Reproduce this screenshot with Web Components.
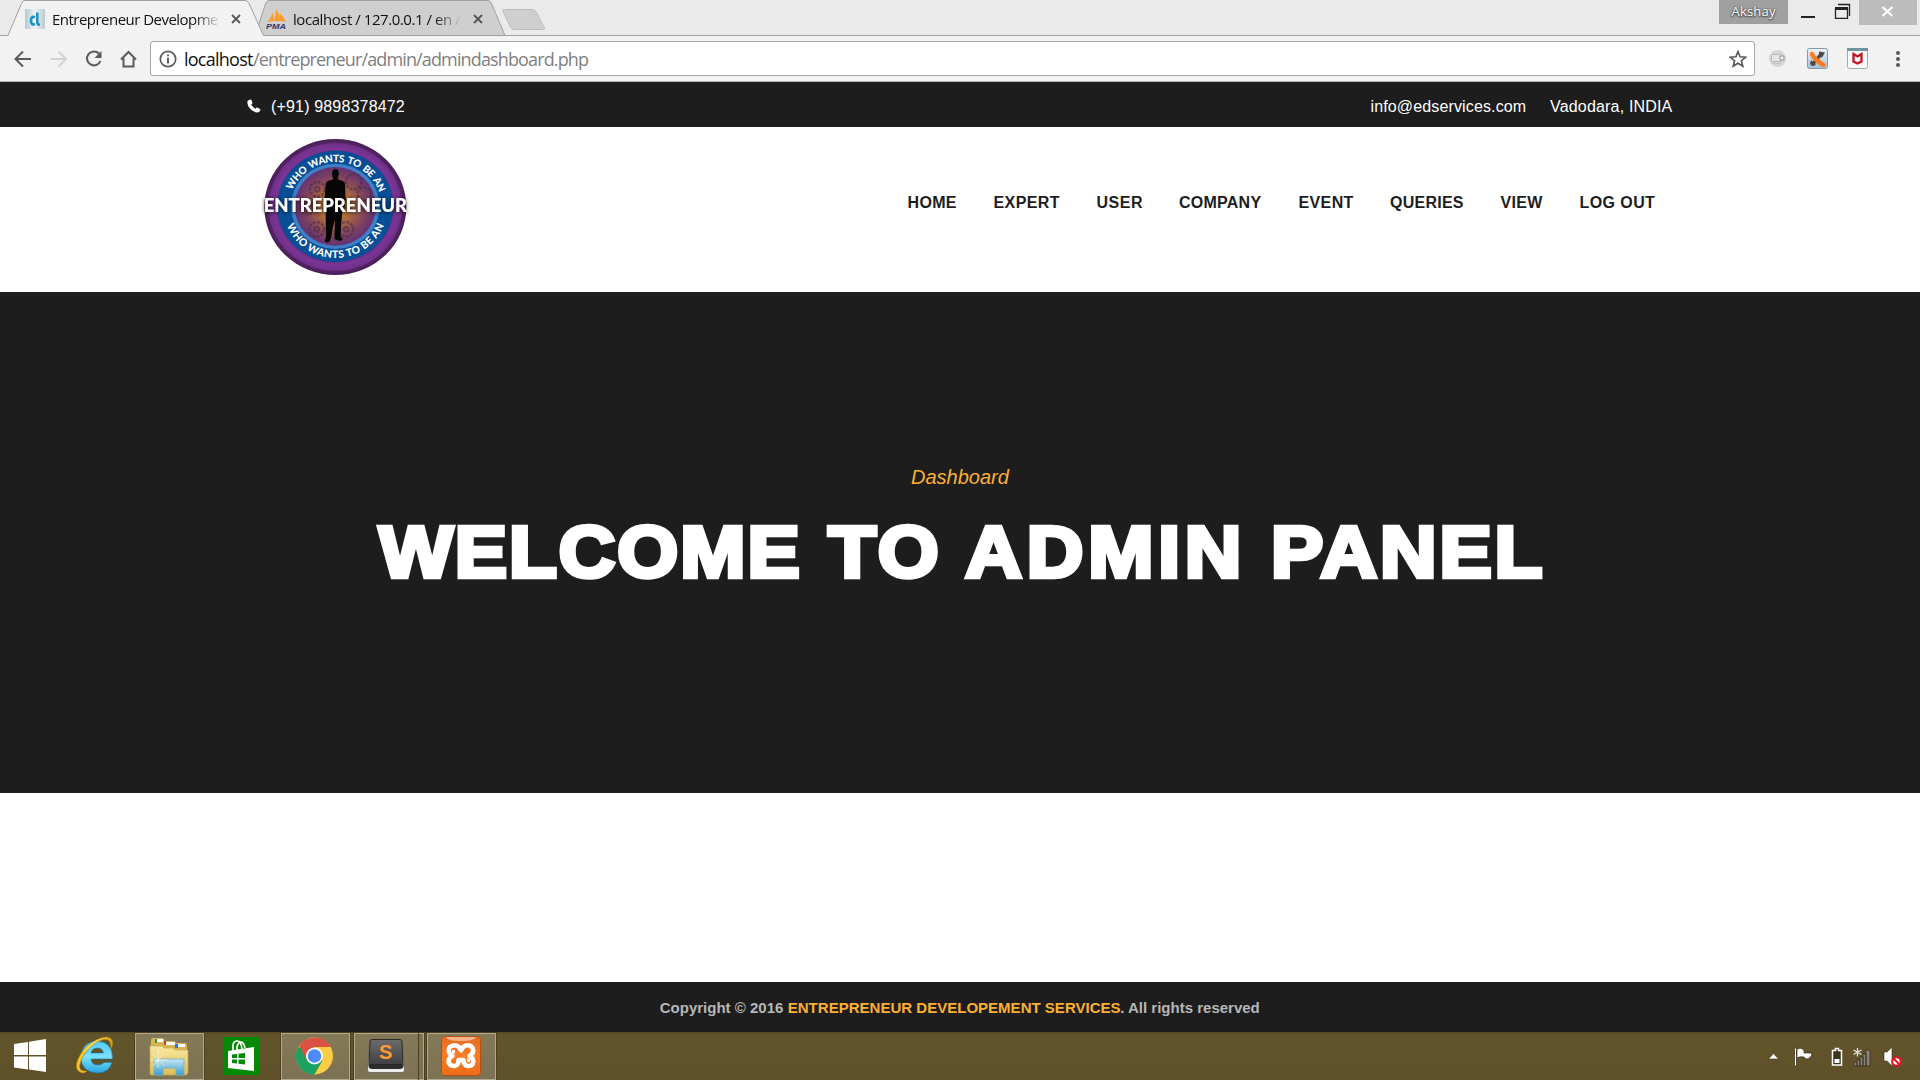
<!DOCTYPE html>
<html lang="en">
<head>
<meta charset="utf-8">
<title>Entrepreneur Development</title>
<style>
html,body{margin:0;height:100%;overflow:hidden;background:#fff}
body{font-family:"Liberation Sans",Arial,sans-serif}
</style>
</head>
<body>
<desktop-screen></desktop-screen>
<script>
const define = (name, html) => {
  const t = document.createElement('template');
  t.innerHTML = html;
  customElements.define(name, class extends HTMLElement {
    constructor() {
      super();
      this.attachShadow({ mode: 'open' }).appendChild(t.content.cloneNode(true));
    }
  });
};

/* Text run tracked to occupy a given width in pixels. */
customElements.define('fit-text', class extends HTMLElement {
  constructor() {
    super();
    this.attachShadow({ mode: 'open' }).innerHTML =
      '<style>:host{display:block;white-space:pre;flex:none;overflow:visible}span{display:inline-block}</style><span><slot></slot></span>';
  }
  connectedCallback() {
    const span = this.shadowRoot.querySelector('span');
    const w = +this.getAttribute('w');
    const n = this.textContent.length;
    const natural = span.offsetWidth;
    span.style.letterSpacing = ((w - natural) / (n - 1)) + 'px';
    this.style.width = w + 'px';
  }
});

define('browser-tabs', `
<style>
:host{display:block;height:36px;background:#eaeaea;position:relative;font:15px "Open Sans","Noto Sans",sans-serif;color:#111}
.shapes{position:absolute;left:0;top:0}
.row{position:relative;display:flex;height:36px}
.tab{display:flex;height:20px;padding-top:9px;align-items:center;box-sizing:content-box}
.tab svg{flex:none}
.one{margin-left:25px}.two{margin-left:24px}
.label{margin-left:7px;line-height:20px;-webkit-mask-image:linear-gradient(90deg,#000 84%,transparent)}
.one .label{width:169px;margin-right:9px}
.two .label{width:168px;margin-right:11px}
.win{margin-left:auto;display:flex;align-items:flex-start}
.user{width:69px;height:24px;background:#a0a0a0;color:#fff;font-size:13px;line-height:23px;text-shadow:0 0 2px #333,0 1px 2px #333;display:flex;justify-content:center}
.win svg{flex:none}
</style>
<svg class="shapes" width="1920" height="36">
  <path d="M0 35.5H1920" stroke="#a3a3a3"/>
  <path d="M502.800 11Q502.500 9.500 504.500 9.500H532Q535 9.500 536.200 12L544 27Q545.500 29.500 542.500 29.500H514.500Q511.500 29.500 510.500 27Z" fill="#cfcfcf" stroke="#bcbcbc"/>
  <path d="M255 35.500L265.500 4Q266.500.5 269 .5H488Q490.500.5 491.700 4L505 35.500Z" fill="#cfcfcf" stroke="#9f9f9f"/>
  <path d="M8 35.500L21.500 3.500Q22.500.5 25 .5H245Q247.500.5 249 3.500L263.500 35.500" fill="#f2f2f2" stroke="#9f9f9f"/>
  <path d="M8.500 35.500H263" stroke="#f2f2f2"/>
</svg>
<div class="row">
  <div class="tab one">
    <svg width="20" height="20" viewBox="0 0 20 20"><defs><linearGradient id="f"><stop stop-color="#b4cbd4"/><stop offset=".5" stop-color="#eef3f4"/><stop offset="1" stop-color="#b9c9cf"/></linearGradient></defs><rect width="20" height="20" fill="url(#f)"/><path d="M10 8.200C6.500 7 6 9.500 6 12s1 4 4 3.200M12.300 3.500V13.500Q12.300 15.700 15 15.700" fill="none" stroke="#1d93c8" stroke-width="2.600"/></svg>
    <div class="label"><fit-text w="167">Entrepreneur Developme</fit-text></div>
    <svg width="12" height="12" viewBox="0 0 12 12"><path d="M2 2L10 10M10 2L2 10" stroke="#555" stroke-width="1.800"/></svg>
  </div>
  <div class="tab two">
    <svg width="20" height="20" viewBox="0 0 20 20"><path d="M1 13Q5 10 7 3L8 12ZM8 12Q10 6 10 0Q14 5 14 12ZM14 12Q14 7 13.500 4Q18 8 20 13Z" fill="#f89c2c"/><text x="0" y="19.500" font-family="Liberation Sans" font-weight="bold" font-style="italic" font-size="8" textLength="20" lengthAdjust="spacingAndGlyphs" fill="#35356b">PMA</text></svg>
    <div class="label"><fit-text w="168">localhost / 127.0.0.1 / en /</fit-text></div>
    <svg width="12" height="12" viewBox="0 0 12 12"><path d="M2 2L10 10M10 2L2 10" stroke="#555" stroke-width="1.800"/></svg>
  </div>
  <div class="win">
    <div class="user"><fit-text w="44">Akshay</fit-text></div>
    <svg width="132" height="26" viewBox="0 0 132 26"><path d="M13 17H27" stroke="#222" stroke-width="2"/><path d="M50 4.500H61.500V16" fill="none" stroke="#222" stroke-width="1.300"/><path d="M47.500 8V18.300H59.500V8" fill="none" stroke="#222" stroke-width="1.300"/><path d="M47 8.500H60" stroke="#222" stroke-width="3"/><rect x="71" width="58" height="25" fill="#bcbcbc"/><path d="M94.500 7L104.500 16M104.500 7L94.500 16" stroke="#fff" stroke-width="2.200"/></svg>
  </div>
</div>`);

define('browser-toolbar', `
<style>
:host{display:flex;height:46px;box-sizing:border-box;background:#f2f2f2;border-bottom:1px solid #b6b6b6;align-items:flex-start}
svg{flex:none;display:block}
.nav{margin-left:14px;padding-top:14px;width:136px}
.box{margin-top:5px;flex:none;width:1605px;height:35px;box-sizing:border-box;border:1px solid #a6a6a6;border-radius:3px;background:#fff;display:flex;align-items:center;padding:0 7px 0 8px;font:18px/32px "Open Sans","Noto Sans",sans-serif;color:#111}
.host{margin-left:7px}
.path{color:#808080}
.star{margin-left:auto}
.ext{margin-top:12px}
</style>
<svg class="nav" height="20" viewBox="0 0 136 20" fill="none" stroke-width="2"><g stroke="#5a5a5a"><path d="M17 9H2M9 1.500L1.500 9L9 16.500"/><path d="M85 3.500A7 7 0 1 0 86.500 11"/><path d="M87.500 1V8H80.500Z" fill="#5a5a5a" stroke="none"/><path d="M107 9.500L114.500 2L122 9.500M109.500 8.500V16.500H119.500V8.500"/></g><path d="M36.500 9H51.500M44.500 1.500L52 9L44.500 16.500" stroke="#d2d2d2"/></svg>
<div class="box">
  <svg width="18" height="18" viewBox="0 0 18 18" fill="none" stroke="#5a5a5a"><circle cx="9" cy="9" r="7.700" stroke-width="1.700"/><path d="M9 7.800V13.500M9 4.500V6.300" stroke-width="1.900"/></svg>
  <fit-text class="host" w="69">localhost</fit-text><fit-text class="path" w="336">/entrepreneur/admin/admindashboard.php</fit-text>
  <svg class="star" width="18" height="18" viewBox="0 0 18 18"><path d="M9 1.500L11.100 6.700L16.800 7.100L12.400 10.700L13.800 16.200L9 13.200L4.200 16.200L5.600 10.700L1.200 7.100L6.900 6.700Z" fill="none" stroke="#555" stroke-width="1.600"/></svg>
</div>
<svg class="ext" width="165" height="22" viewBox="1755 48 165 22">
  <defs><linearGradient id="b" x2="0" y2="1"><stop stop-color="#edf3f7"/><stop offset="1" stop-color="#a7c0d0"/></linearGradient></defs>
  <circle cx="1777.500" cy="58.500" r="8.500" fill="#d6d6d6"/><rect x="1771.500" y="54.500" width="9.500" height="7" rx="1" fill="#e6e6e6" stroke="#b6b6b6"/><path d="M1780 56h4v4h-4z" fill="#eee" stroke="#999"/><path d="M1772 63.500h9" stroke="#c4c4c4"/>
  <rect x="1807.500" y="48.500" width="20" height="20" rx="2" fill="url(#b)" stroke="#8199a8"/><path d="M1812 65L1822 53" stroke="#4a4a4a" stroke-width="3.500"/><path d="M1819 51.500l6 1-3 5-3-1zM1811 60l5 5-4 1-2-2z" fill="#4a4a4a"/><path d="M1812 54Q1813 57 1817 60.500T1823.500 65" fill="none" stroke="#ff7a1c" stroke-width="4.500" stroke-linecap="round"/>
  <rect x="1847.500" y="48.500" width="20" height="20" rx="2" fill="#fafafa" stroke="#a2a9ac"/><path d="M1847 48h21v3h-21z" fill="#7393a0"/><path d="M1853.500 54L1857.500 56.500L1861.500 54V61.500L1857.500 63.500L1853.500 61.500Z" fill="none" stroke="#c4141f" stroke-width="2.300"/>
  <g fill="#5a5a5a"><circle cx="1898" cy="53" r="2"/><circle cx="1898" cy="59" r="2"/><circle cx="1898" cy="65" r="2"/></g>
</svg>`);

define('contact-bar', `
<style>
:host{display:flex;height:45px;background:#1d1d1d;color:#fff;font:16px/49px "Liberation Sans",Arial,sans-serif;padding:0 247.500px 0 247px;align-items:flex-start}
svg{margin-top:17px;flex:none}
.tel{margin-left:10px}.mail{margin-left:auto}.city{margin-left:24px}
</style>
<svg width="14" height="14" viewBox="0 0 14 14"><path d="M1 1.500L3.500.5Q4.300.5 4.500 1.200L5.500 4Q5.500 4.500 4.200 5.500Q5.500 8.300 8.500 9.800Q9.500 8.300 10.200 8.500L13 10Q13.600 10.400 13.300 11.200Q12.500 13.500 10 13.500Q6.500 13.200 3.200 9.800Q.3 6.500.3 3.500Q.3 2.300 1 1.500Z" fill="#fff"/></svg>
<fit-text class="tel" w="133.500">(+91) 9898378472</fit-text>
<fit-text class="mail" w="155.500">info@edservices.com</fit-text>
<fit-text class="city" w="122.500">Vadodara, INDIA</fit-text>`);

define('brand-logo', `
<style>:host{display:block;width:150px;height:142px}svg{display:block}</style>
<svg width="150" height="142" viewBox="95 165 450 426">
  <defs>
    <radialGradient id="p"><stop offset=".78" stop-color="#60277d"/><stop offset=".85" stop-color="#7b3596"/><stop offset=".93" stop-color="#70308b"/><stop offset=".95" stop-color="#512260"/><stop offset="1" stop-color="#4a1f59"/></radialGradient>
    <radialGradient id="c"><stop stop-color="#d88a2c"/><stop offset=".4" stop-color="#ae6c3d"/><stop offset=".75" stop-color="#80435f"/><stop offset="1" stop-color="#633274"/></radialGradient>
    <filter id="s" x="-10%" y="-50%" width="120%" height="200%"><feDropShadow dx="0" dy="2" stdDeviation="6" flood-color="#000" flood-opacity=".9"/></filter>
    <path id="top" d="M178.500 381A139.500 135 0 0 1 457.500 381"/>
    <path id="bot" d="M162 381A156 153 0 0 0 474 381"/>
  </defs>
  <ellipse cx="318" cy="381" rx="213" ry="204" fill="url(#p)"/>
  <ellipse cx="318" cy="379" rx="174" ry="167" fill="#064f96"/>
  <ellipse cx="318" cy="379" rx="133" ry="128" fill="#3f7fc8"/>
  <ellipse cx="318" cy="379" rx="122" ry="118" fill="url(#c)"/>
  <g fill="none" stroke="#4d2b45" stroke-opacity=".6" stroke-width="7" stroke-dasharray="9 4"><circle cx="264" cy="328" r="22"/><circle cx="373" cy="305" r="23"/><circle cx="405" cy="342" r="20"/><circle cx="262" cy="448" r="22"/><circle cx="350" cy="448" r="22"/><circle cx="235" cy="385" r="18"/></g>
  <g fill="none" stroke="#4d2b45" stroke-opacity=".6" stroke-width="6"><circle cx="262" cy="448" r="7"/><circle cx="350" cy="448" r="7"/><circle cx="264" cy="328" r="7"/></g>
  <path d="M318 267C327 267 329 275 328 283Q327 291 325 294Q326 299 333 301Q346 303 347 312L349 360L345 390H341L338 405L335 440L334 470Q341 475 340 480Q330 485 315 477L317 420L311 440L306 470L301 485Q291 490 286 484L290 470L289 400L285 360L289 312Q290 303 304 301Q311 299 312 294Q309 291 308 282Q308 268 318 267Z" fill="#050505"/>
  <g fill="#fff" font-family="Lato,sans-serif" font-weight="900"><text font-size="30" word-spacing="4"><textPath href="#top" startOffset="51" textLength="336">WHO WANTS TO BE AN</textPath></text><text font-size="31"><textPath href="#bot" startOffset="57" textLength="372">WHO WANTS TO BE AN</textPath></text></g>
  <text x="103" y="396" font-family="Lato,sans-serif" font-weight="900" font-size="54" fill="#fff" textLength="430" lengthAdjust="spacingAndGlyphs" filter="url(#s)">ENTREPRENEUR</text>
</svg>`);

define('site-header', `
<style>
:host{display:flex;height:165px;background:#fff;box-sizing:border-box;padding:8px 265px 0 261px;justify-content:space-between;align-items:flex-start}
nav{display:flex;gap:37px;padding-top:58px;font:bold 16px/20px "Liberation Sans",Arial,sans-serif;color:#1d1d1d}
</style>
<brand-logo></brand-logo>
<nav><fit-text w="49">HOME</fit-text><fit-text w="66">EXPERT</fit-text><fit-text w="45.500">USER</fit-text><fit-text w="82.500">COMPANY</fit-text><fit-text w="54.500">EVENT</fit-text><fit-text w="73.500">QUERIES</fit-text><fit-text w="42">VIEW</fit-text><fit-text w="75.500">LOG OUT</fit-text></nav>`);

define('hero-banner', `
<style>
:host{display:flex;flex-direction:column;align-items:center;height:501px;box-sizing:border-box;padding-top:172px;background:#1d1d1d}
.sub{font:italic 20px/26px "Liberation Sans",Arial,sans-serif;color:#fbb034}
.title{display:flex;margin:17px 0 0;font:bold 72.500px/90px "Liberation Sans",Arial,sans-serif;color:#fff;-webkit-text-stroke:4.500px #fff;transform:scaleX(1.08)}
.to{margin:0 25px 0 26px}.panel{margin-left:27px}
</style>
<fit-text class="sub" w="98">Dashboard</fit-text>
<h1 class="title"><fit-text w="390">WELCOME</fit-text> <fit-text class="to" w="102">TO</fit-text> <fit-text w="256">ADMIN</fit-text> <fit-text class="panel" w="251">PANEL</fit-text></h1>`);

define('site-footer', `
<style>
:host{display:flex;justify-content:center;height:50px;background:#1d1d1d;color:#b7b7b7;font:bold 15px/52px "Liberation Sans",Arial,sans-serif}
b{color:#fbb034;display:block}
</style>
<fit-text w="128">Copyright © 2016 </fit-text><b><fit-text w="332.500">ENTREPRENEUR DEVELOPEMENT SERVICES</fit-text></b><fit-text w="140">. All rights reserved</fit-text>`);

define('task-button', `
<style>
:host{display:flex;box-sizing:border-box;width:69px;height:47px;border:1px solid #b1aa90;box-shadow:0 0 0 1px #4b4020;background:linear-gradient(#847957,#7c7254);align-items:center;justify-content:center}
</style><slot></slot>`);

define('task-bar', `
<style>
:host{display:flex;height:48px;background:linear-gradient(#55481f,#62552b 3px,#5e5029);align-items:flex-start;box-sizing:border-box;padding-top:1px}
svg{flex:none;display:block}
.win{margin:6px 0 0 14px}.ie{margin:2px 0 0 29px}.b1{margin-left:19px}.b1 svg{margin-right:1px}.store{margin:4px 0 0 19px}
.b2{margin-left:20px}.b3{margin-left:4px;width:65px}.b3 svg{margin:-2px 2px 0 0}.stack{width:5px;height:47px;box-sizing:border-box;border:1px solid #b1aa90;border-left:0;background:#7c7254;box-shadow:0 0 0 1px #4b4020}.b4{margin-left:3px}.b4 svg{margin:-1px 2px 0 0}
.b2 svg{margin:-1px 1px 0 0}
.tray{margin:13px 14px 0 auto}
</style>
<svg class="win" width="33" height="33" viewBox="0 0 33 33" fill="#fff"><path d="M0 5L14 3V16H0ZM15 2.800L32 0V16H15ZM0 17.500H14V30.500L0 28.500ZM15 17.500H32V33L15 30.500Z"/></svg>
<svg class="ie" width="40" height="40" viewBox="0 0 40 40"><defs><linearGradient id="i" x2="0" y2="1"><stop stop-color="#54ccf4"/><stop offset=".5" stop-color="#79e1ff"/><stop offset="1" stop-color="#29a6df"/></linearGradient><linearGradient id="g"><stop stop-color="#f6c11f"/><stop offset=".5" stop-color="#ffe262"/><stop offset="1" stop-color="#dc9d0c"/></linearGradient></defs><path d="M36.500 24H15Q15.500 30 22 30Q26 30 28 27.500H36Q33 38 21.500 38Q5 37 5 22Q6 7 21 6Q37 7 36.500 24ZM15 18H27.500Q26.500 13 21.500 13Q16 13 15 18Z" fill="url(#i)" stroke="#1680ba" stroke-width=".6"/><path d="M7 38Q-3 36 2 24Q7 12 20 5Q33-1 36 5Q38 9 35 14Q35 6 32 5Q27 3 18 9Q6 19 4 29Q2 37 11 36Q9 38 7 38Z" fill="url(#g)" stroke="#a87b12" stroke-width=".6"/></svg>
<task-button class="b1"><svg width="40" height="40" viewBox="0 0 40 40"><defs><linearGradient id="y" x2="0" y2="1"><stop stop-color="#f8e8a2"/><stop offset="1" stop-color="#dfbd54"/></linearGradient><linearGradient id="u" x2="0" y2="1"><stop stop-color="#c5e7f5"/><stop offset="1" stop-color="#3d9cc9"/></linearGradient></defs><path d="M2 3Q2 1 4 1H14L16 4H25L27 6H36Q38 6 38 8V36Q38 38 36 38H2Q1 38 1 36Z" fill="#d9b553"/><path d="M6 2H14V5H6ZM16 5H26V8H16ZM27 7H36V10H27Z" fill="#fff"/><path d="M6 2h2v4H6z" fill="#269b42"/><path d="M15 4h2v4h-2z" fill="#d5382d"/><path d="M26 7h3v4h-3z" fill="#267bd0"/><path d="M1 9H13L15 11H24L26 13H39V36L37 38H2L1 36Z" fill="url(#y)" stroke="#caa74b" stroke-width=".7"/><path d="M5 22H35V38H27V31H14V38H5Z" fill="url(#u)" stroke="#6badca" stroke-width=".8"/><path d="M9 13L9 31M1 23H18M3 17L16 29M15 16L4 29" stroke="#fff8d2" stroke-opacity=".65"/></svg></task-button>
<svg class="store" width="38" height="38" viewBox="0 0 38 38"><rect width="37" height="38" fill="#048904"/><path d="M5 14L31 10V34L5 31Z" fill="#fff"/><path d="M10 14V9Q10 4 14.500 4Q18 4 19 12M14 13V10Q15 5 18.500 5Q21 6 22 11" fill="none" stroke="#fff" stroke-width="1.700"/><path d="M9 17.500L14 17V21H9ZM15.500 16.700L22 16V21H15.500ZM9 22.500H14V26.500L9 26ZM15.500 22.500H22V27.500L15.500 26.800Z" fill="#048904"/></svg>
<task-button class="b2"><svg width="38" height="40" viewBox="0 0 38 40"><circle cx="18.500" cy="20" r="18.500" fill="#ffcd42"/><path d="M18.500 20L2.500 10.700A18.500 18.500 0 0 0 18.500 38.500L26.600 24.600Z" fill="#1ba261"/><path d="M18.500 11H34.700A18.500 18.500 0 0 0 3.200 9.700L11 24.500Z" fill="#dd5044"/><circle cx="18.500" cy="20" r="8.500" fill="#fff"/><circle cx="18.500" cy="20" r="6.800" fill="#4c8bf5"/></svg></task-button>
<task-button class="b3"><svg width="38" height="40" viewBox="0 0 38 40"><defs><linearGradient id="k" x2="0" y2="1"><stop stop-color="#6c6c6c"/><stop offset="1" stop-color="#383838"/></linearGradient></defs><path d="M3 8Q3 4 6 4H32Q35 4 35 8L37.500 34Q37.500 36.500 35 36.500H3Q.5 36.500 .5 34Z" fill="#eee" stroke="#555" stroke-width=".7"/><path d="M5 3.500H33Q35 3.500 35 5.500L36 30Q36 32.500 33 32.500H5Q2 32.500 2 30L3 5.500Q3 3.500 5 3.500Z" fill="url(#k)" stroke="#2a2a2a"/><path d="M2.500 28H35.500V31.500H2.500Z" fill="#2a2a2a"/><text x="12" y="23" font-family="Liberation Sans" font-weight="bold" font-size="20" fill="#ff9a32">S</text></svg></task-button><div class="stack"></div>
<task-button class="b4"><svg width="40" height="40" viewBox="0 0 40 40"><defs><linearGradient id="x" x2="0" y2="1"><stop stop-color="#e56c22"/><stop offset=".5" stop-color="#fb7c24"/><stop offset="1" stop-color="#ec6b19"/></linearGradient></defs><rect x=".5" y=".5" width="39" height="39" rx="3" fill="url(#x)" stroke="#b64d13"/><path d="M5 1H35Q34 5 20 5T5 1Z" fill="#f7b48c"/><path d="M20 14.500Q18 9 13 9.200Q7.500 10 7.700 15Q8.500 18.500 11.500 20Q7 22 7.700 26.500Q9.500 30.500 14 30Q18 28.500 17.500 24H22.500Q22.500 29 26.500 30Q32 30.500 32.300 25.500Q32 21.500 28.500 20Q32 18 32.300 14.500Q31.500 9.500 27 9.200Q22 9 20 14.500Z" fill="none" stroke="#fff" stroke-width="4.500" stroke-linejoin="round"/><path d="M12.500 14V17.500" stroke="#fff" stroke-width="3"/><path d="M27.500 22.500V26" stroke="#fff" stroke-width="3"/></svg></task-button>
<svg class="tray" width="140" height="24" viewBox="1766 1046 140 24"><path d="M1768.500 1059L1773.500 1053.500L1778.500 1059Z" fill="#fff" stroke="#3d3418" stroke-width=".6"/><g stroke="#332a12" stroke-width=".7" fill="#fff"><path d="M1794.500 1048H1796.500V1066H1794.500Z"/><path d="M1797 1049Q1801 1047 1804 1050V1053L1812 1053Q1811 1059 1806 1059L1804 1057Q1800 1056 1797 1058Z"/></g><path d="M1835.500 1048.500H1838.500V1050.500H1841.500V1065H1832.500V1050.500H1835.500Z" fill="#3b331c" stroke="#fff" stroke-width="1.500"/><path d="M1834.500 1059h5v4h-5z" fill="#fff"/><g fill="#85827a" stroke="#302812" stroke-width=".7"><path d="M1854 1062h3v4h-3zM1857 1060h3v6h-3zM1860 1057h3v9h-3zM1863 1054h3v12h-3zM1866 1050h4v16h-4z"/></g><path d="M1857.500 1048V1056.500M1853.500 1050L1861.500 1054.500M1861.500 1050L1853.500 1054.500" stroke="#e2e2e2" stroke-width="1.300"/><path d="M1884 1052H1887L1892 1047V1066L1887 1061H1884Z" fill="#fff" stroke="#3a3014" stroke-width=".6"/><circle cx="1896.500" cy="1061.500" r="4.200" fill="#fff" stroke="#e5141b" stroke-width="2"/><path d="M1893.500 1058.500L1899.500 1064.500" stroke="#e5141b" stroke-width="2"/></svg>`);

define('desktop-screen', `
<style>:host{display:flex;flex-direction:column;width:1920px;height:1080px;background:#fff;overflow:hidden}main{flex:1}:host>*{flex-shrink:0}</style>
<browser-tabs></browser-tabs><browser-toolbar></browser-toolbar><contact-bar></contact-bar><site-header></site-header><hero-banner></hero-banner><main></main><site-footer></site-footer><task-bar></task-bar>`);
</script>
</body>
</html>
